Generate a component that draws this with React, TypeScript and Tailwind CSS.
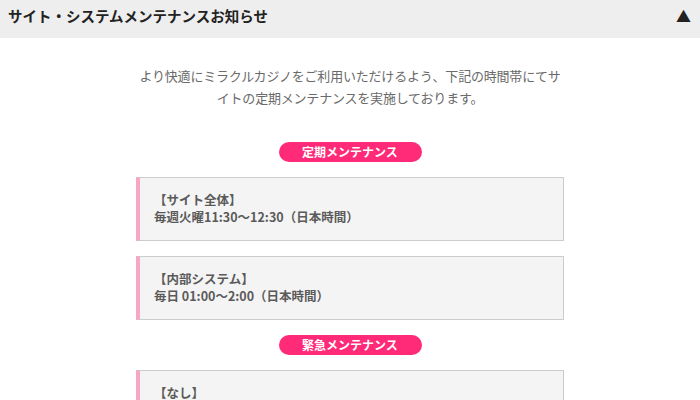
import React from "react";

const Pill = ({ children }: { children: React.ReactNode }) => (
  <div className="flex justify-center">
    <div className="w-[143px] h-[20px] rounded-full bg-[#ff2a78] text-white text-[12px] font-bold leading-[20px] text-center">
      {children}
    </div>
  </div>
);

const Box = ({ title, body }: { title: string; body?: string }) => (
  <div className="w-[428px] mx-auto bg-[#f4f4f4] border border-[#cccccc] border-l-[4px] border-l-[#f7a6c6] pl-[14px] pt-[13px] pb-[15px] text-[12.5px] leading-[17px] font-bold text-[#5a5a5a]">
    <div>{title}</div>
    {body && <div>{body}</div>}
  </div>
);

export default function App() {
  return (
    <div
      className="w-[700px] h-[400px] overflow-hidden bg-white"
      style={{ fontFamily: '"Noto Sans CJK JP", "Noto Sans", sans-serif' }}
    >
      <div className="h-[38px] bg-[#eeeeee] flex items-start justify-between pl-[8px] pr-[9px] pt-[5px]">
        <div className="text-[14.5px] leading-[22px] font-bold text-[#222222]">サイト・システムメンテナンスお知らせ</div>
        <div className="text-[15px] leading-[22px] text-[#222222]">▲</div>
      </div>
      <p className="mt-[27px] text-center text-[13px] leading-[22px] text-[#6a6a6a] tracking-[-0.2px]">
        より快適にミラクルカジノをご利用いただけるよう、下記の時間帯にてサ
        <br />
        イトの定期メンテナンスを実施しております。
      </p>
      <div className="mt-[33px] flex flex-col gap-[15px]">
        <Pill>定期メンテナンス</Pill>
        <Box title="【サイト全体】" body="毎週火曜11:30～12:30（日本時間）" />
        <Box title="【内部システム】" body="毎日 01:00～2:00（日本時間）" />
        <Pill>緊急メンテナンス</Pill>
        <Box title="【なし】" body=" " />
      </div>
    </div>
  );
}
